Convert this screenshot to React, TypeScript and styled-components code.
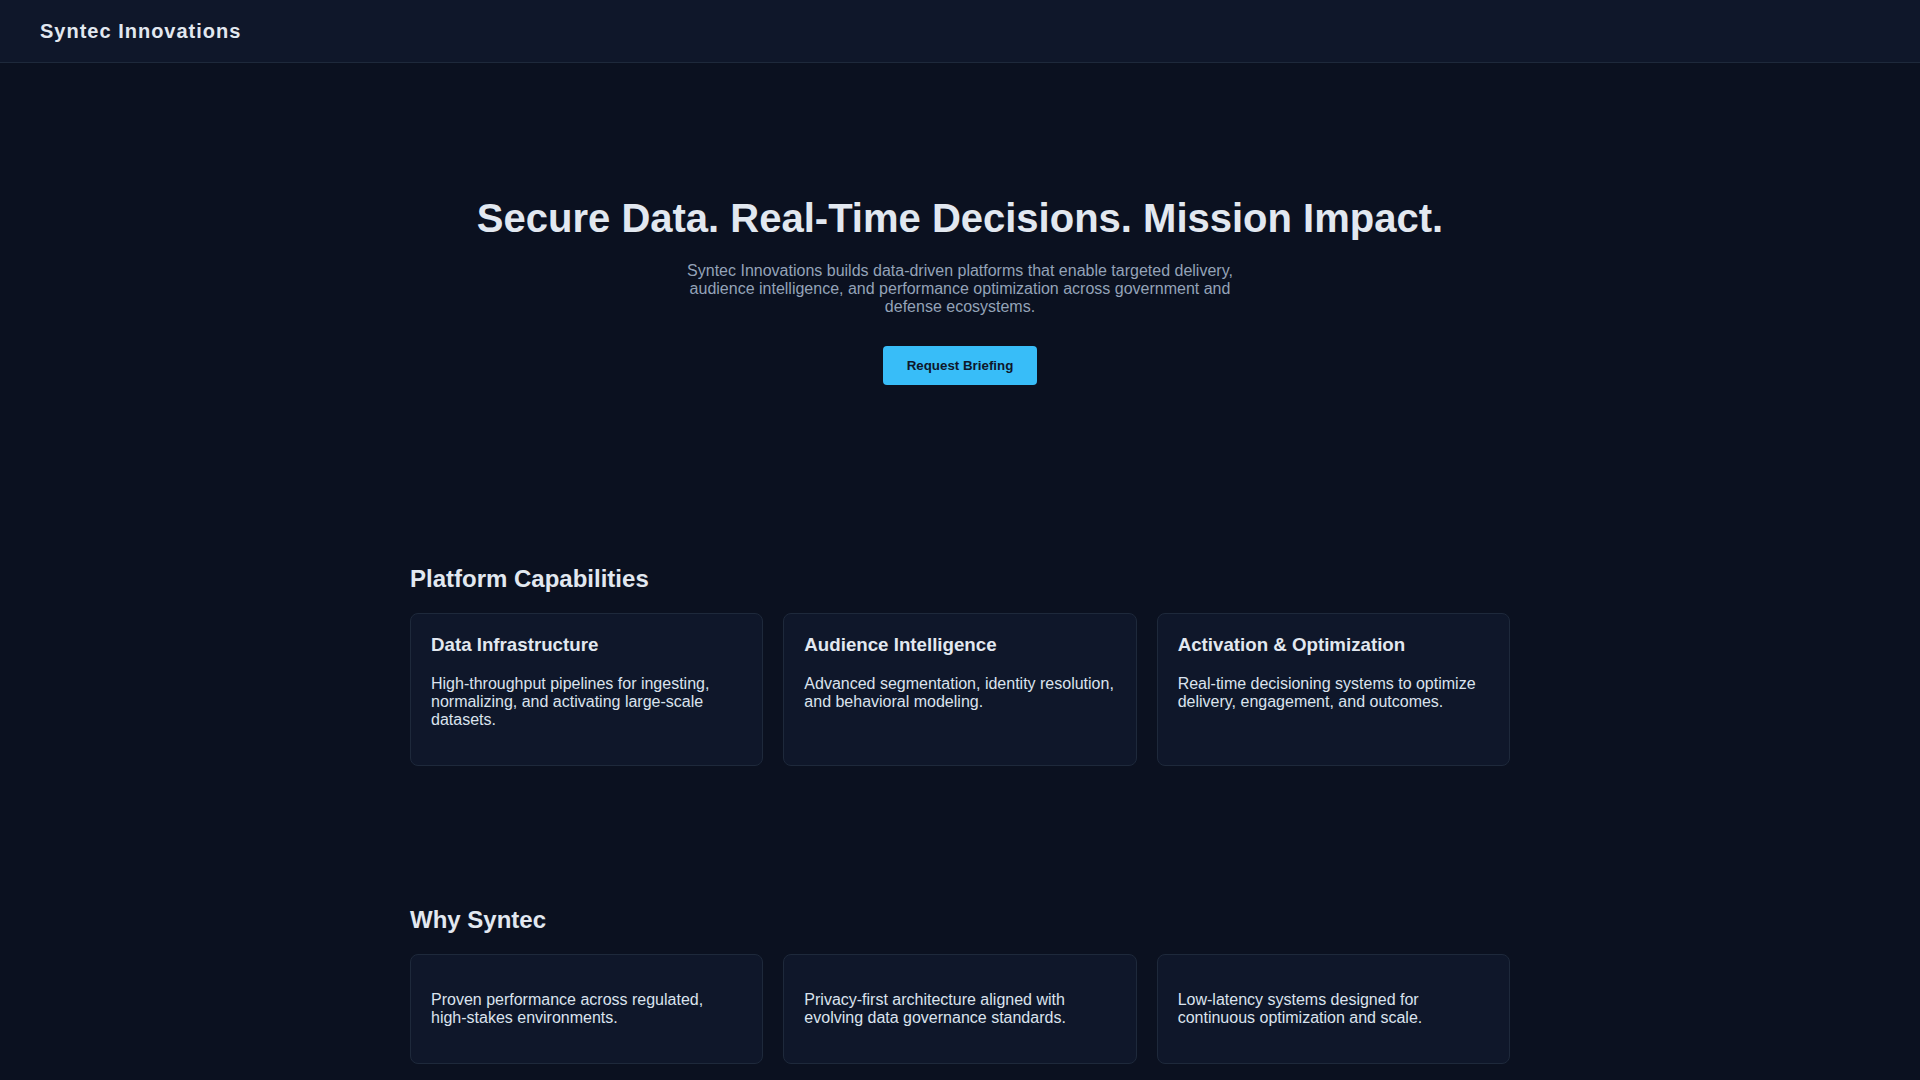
import React from 'react';
import styled, { createGlobalStyle } from 'styled-components';

const GlobalStyle = createGlobalStyle`
    * {
        box-sizing: border-box;
    }
    body {
        margin: 0;
        background: #0b1120;
        color: #e2e8f0;
        font-family: "Liberation Sans", Arial, sans-serif;
    }
`

const Header = styled.header`
    height: 63px;
    display: flex;
    align-items: center;
    padding: 0 40px;
    background: #0f172a;
    border-bottom: 1px solid #1e293b;
`

const Logo = styled.div`
    font-size: 20px;
    font-weight: bold;
    letter-spacing: 1px;
    color: #e2e8f0;
`

const Hero = styled.section`
    display: flex;
    flex-direction: column;
    align-items: center;
    text-align: center;
    padding: 133px 20px 110px;
`

const Title = styled.h1`
    margin: 0 0 21px;
    font-size: 40px;
    font-weight: bold;
    color: #e2e8f0;
`

const Lead = styled.p`
    max-width: 560px;
    margin: 0 0 30px;
    font-size: 16px;
    color: #94a3b8;
`

const Button = styled.button`
    padding: 12px 24px;
    border: none;
    border-radius: 4px;
    background: #38bdf8;
    color: #0f172a;
    font-family: inherit;
    font-size: 13.333px;
    font-weight: bold;
    cursor: pointer;
`

const Section = styled.section`
    max-width: 1140px;
    margin: 0 auto;
    padding: 70px 20px;
`

const SectionTitle = styled.h2`
    margin: 0 0 20px;
    font-size: 24px;
    font-weight: bold;
    color: #e2e8f0;
`

const Grid = styled.div`
    display: grid;
    grid-template-columns: repeat(3, 1fr);
    gap: 20px;
`

const Card = styled.div`
    padding: 20px;
    background: #0f172a;
    border: 1px solid #1e293b;
    border-radius: 8px;
`

const CardTitle = styled.h3`
    margin: 0 0 19px;
    font-size: 18.72px;
    font-weight: bold;
    color: #e2e8f0;
`

const CardText = styled.p<{ $spaced?: boolean }>`
    margin: ${p => (p.$spaced ? '16px 0' : '0 0 16px')};
    font-size: 16px;
    color: #dbe3ee;
`

const capabilities = [
    {
        title: 'Data Infrastructure',
        text: 'High-throughput pipelines for ingesting, normalizing, and activating large-scale datasets.',
    },
    {
        title: 'Audience Intelligence',
        text: 'Advanced segmentation, identity resolution, and behavioral modeling.',
    },
    {
        title: 'Activation & Optimization',
        text: 'Real-time decisioning systems to optimize delivery, engagement, and outcomes.',
    },
];

const reasons = [
    'Proven performance across regulated, high-stakes environments.',
    'Privacy-first architecture aligned with evolving data governance standards.',
    'Low-latency systems designed for continuous optimization and scale.',
];

const App = () => {
    return (
        <>
            <GlobalStyle />
            <Header>
                <Logo>Syntec Innovations</Logo>
            </Header>

            <Hero>
                <Title>Secure Data. Real-Time Decisions. Mission Impact.</Title>
                <Lead>
                    Syntec Innovations builds data-driven platforms that enable targeted delivery,
                    audience intelligence, and performance optimization across government and
                    defense ecosystems.
                </Lead>
                <Button>Request Briefing</Button>
            </Hero>

            <Section>
                <SectionTitle>Platform Capabilities</SectionTitle>
                <Grid>
                    {capabilities.map(c => (
                        <Card key={c.title}>
                            <CardTitle>{c.title}</CardTitle>
                            <CardText>{c.text}</CardText>
                        </Card>
                    ))}
                </Grid>
            </Section>

            <Section>
                <SectionTitle>Why Syntec</SectionTitle>
                <Grid>
                    {reasons.map(r => (
                        <Card key={r}>
                            <CardText $spaced>{r}</CardText>
                        </Card>
                    ))}
                </Grid>
            </Section>
        </>
    );
};

export default App;
